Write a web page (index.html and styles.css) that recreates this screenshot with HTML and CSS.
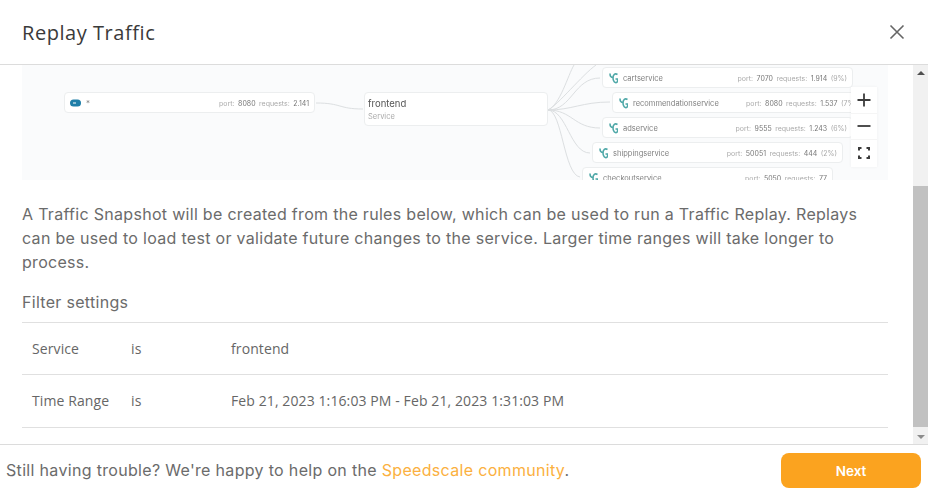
FILE: index.html
```html
<!DOCTYPE html>
<html>
  <head>
    <meta charset="utf-8">
    <title>Replay Traffic</title>
    <link rel="stylesheet" href="styles.css">
  </head>
  <body>
    <div class="modal">
      <header class="modal-head">
        <h1>Replay Traffic</h1>
        <svg class="close" width="16" height="16" viewBox="0 0 16 16"><path d="M1.500 1.500l13 13M14.500 1.500l-13 13"/></svg>
      </header>
      <div class="modal-mid">
        <div class="modal-body">
          <div class="map">
            <div class="map-inner">
              <svg class="edges" width="866" height="115" viewBox="0 0 866 115">
                <path d="M294 38C320 38 316 44 341 44"/>
                <path d="M526 45C550 45 552 13 578 13"/>
                <path d="M526 45C550 45 560 37 588 37"/>
                <path d="M526 45C550 45 552 63 578 63"/>
                <path d="M526 45C545 45 548 88 568 88"/>
                <path d="M526 45C540 45 542 110 558 112"/>
                <path d="M526 45C538 40 546 10 552 0"/>
                <path d="M526 45C536 40 560 10 574 0"/>
              </svg>
              <div class="node node-star">
                <svg class="pill" width="11" height="8" viewBox="0 0 11 8"><rect width="11" height="7" y="0.500" rx="3.500"/><path d="M3 4h3"/></svg>
                <span class="star">*</span>
                <span class="stats"><i>port:</i> 8080 <i>requests:</i> 2.141</span>
              </div>
              <div class="node node-front">
                <b>frontend</b>
                <small>Service</small>
              </div>
              <div class="node node-cart">
                <svg class="leaf" width="9" height="12" viewBox="0 0 9 12"><path d="M8.500 2.500C6 1 4 2.500 4 6s2 5 3.500 4.500S8.800 8.500 8.500 7H6.500M4 5.500C2 5.500 1 4 1 1.500"/></svg>
                <span class="name">cartservice</span>
                <span class="stats"><i>port:</i> 7070 <i>requests:</i> 1.914 <i>(9%)</i></span>
              </div>
              <div class="node node-rec">
                <svg class="leaf" width="9" height="12" viewBox="0 0 9 12"><path d="M8.500 2.500C6 1 4 2.500 4 6s2 5 3.500 4.500S8.800 8.500 8.500 7H6.500M4 5.500C2 5.500 1 4 1 1.500"/></svg>
                <span class="name">recommendationservice</span>
                <span class="stats"><i>port:</i> 8080 <i>requests:</i> 1.537 <i>(7%)</i></span>
              </div>
              <div class="node node-ad">
                <svg class="leaf" width="9" height="12" viewBox="0 0 9 12"><path d="M8.500 2.500C6 1 4 2.500 4 6s2 5 3.500 4.500S8.800 8.500 8.500 7H6.500M4 5.500C2 5.500 1 4 1 1.500"/></svg>
                <span class="name">adservice</span>
                <span class="stats"><i>port:</i> 9555 <i>requests:</i> 1.243 <i>(6%)</i></span>
              </div>
              <div class="node node-ship">
                <svg class="leaf" width="9" height="12" viewBox="0 0 9 12"><path d="M8.500 2.500C6 1 4 2.500 4 6s2 5 3.500 4.500S8.800 8.500 8.500 7H6.500M4 5.500C2 5.500 1 4 1 1.500"/></svg>
                <span class="name">shippingservice</span>
                <span class="stats"><i>port:</i> 50051 <i>requests:</i> 444 <i>(2%)</i></span>
              </div>
              <div class="node node-check">
                <svg class="leaf" width="9" height="12" viewBox="0 0 9 12"><path d="M8.500 2.500C6 1 4 2.500 4 6s2 5 3.500 4.500S8.800 8.500 8.500 7H6.500M4 5.500C2 5.500 1 4 1 1.500"/></svg>
                <span class="name">checkoutservice</span>
                <span class="stats"><i>port:</i> 5050 <i>requests:</i> 77</span>
              </div>
            </div>
            <div class="zoom-box">
              <div class="zoom-btn"><svg width="14" height="14" viewBox="0 0 14 14"><path d="M7 .500v13M.500 7h13"/></svg></div>
              <div class="zoom-btn"><svg width="14" height="14" viewBox="0 0 14 14"><path d="M.500 7h13"/></svg></div>
              <div class="zoom-btn"><svg width="14" height="14" viewBox="0 0 14 14"><path class="corners" d="M2 4.500V2h2.500M9.500 2H12v2.500M12 9.500V12H9.500M4.500 12H2V9.500"/></svg></div>
            </div>
          </div>
          <p class="intro">A Traffic Snapshot will be created from the rules below, which can be used to run a Traffic Replay. Replays can be used to load test or validate future changes to the service. Larger time ranges will take longer to process.</p>
          <h2>Filter settings</h2>
          <div class="rules">
            <div class="rule"><span>Service</span><span>is</span><span>frontend</span></div>
            <div class="rule"><span>Time Range</span><span>is</span><span>Feb 21, 2023 1:16:03 PM - Feb 21, 2023 1:31:03 PM</span></div>
          </div>
        </div>
        <div class="scrollbar">
          <div class="arrow up"></div>
          <div class="track"><div class="thumb"></div></div>
          <div class="arrow down"></div>
        </div>
      </div>
      <footer class="modal-foot">
        <p>Still having trouble? We're happy to help on the <a href="#">Speedscale community</a>.</p>
        <button class="next">Next</button>
      </footer>
    </div>
  </body>
</html>
```

FILE: styles.css
```css
html, body {
  margin: 0;
  height: 100%;
  background: #fff;
}
.modal {
  width: 928px;
  height: 491px;
  display: flex;
  flex-direction: column;
  overflow: hidden;
  font-family: "Open Sans", sans-serif;
  color: #5c5c5c;
}
.modal-head {
  height: 64px;
  flex: none;
  display: flex;
  align-items: center;
  justify-content: space-between;
  padding: 0 23px 0 22px;
  border-bottom: 1px solid #dcdcdc;
}
.modal-head h1 {
  margin: 0;
  font-size: 20px;
  font-weight: 400;
  color: #3a3a3a;
  letter-spacing: 0.55px;
}
.close path {
  fill: none;
  stroke: #666;
  stroke-width: 1.6;
}
.modal-mid {
  flex: 1;
  min-height: 0;
  display: flex;
}
.modal-body {
  flex: 1;
  padding: 0 25px 0 22px;
  overflow: hidden;
}
.map {
  height: 115px;
  position: relative;
  overflow: hidden;
  background: #fafbfc;
  filter: blur(0.6px);
}
.map-inner {
  position: absolute;
  inset: 0;
}
.edges {
  position: absolute;
  left: 0;
  top: 0;
}
.edges path {
  fill: none;
  stroke: #dcdfe1;
  stroke-width: 1;
}
.node {
  position: absolute;
  box-sizing: border-box;
  height: 21px;
  width: 251px;
  background: #fff;
  border: 1px solid #eceeef;
  border-radius: 4px;
  display: flex;
  align-items: center;
  padding: 1px 5px 0;
  font-family: Inter, sans-serif;
  font-size: 8px;
  color: #777;
  white-space: nowrap;
}
.node-star { left: 42px; top: 27px; }
.node-front {
  left: 342px;
  top: 27px;
  width: 184px;
  height: 34px;
  padding: 0 3px;
  flex-direction: column;
  align-items: flex-start;
  justify-content: center;
  gap: 3px;
}
.node-front b {
  font-weight: 400;
  font-size: 9.500px;
  color: #555;
  line-height: 11px;
}
.node-front small {
  font-size: 7.500px;
  color: #aaa;
  line-height: 9px;
}
.node-cart { left: 580px; top: 2px; }
.node-rec { left: 590px; top: 27px; }
.node-ad { left: 580px; top: 52px; }
.node-ship { left: 570px; top: 77px; }
.node-check { left: 560px; top: 102px; }
.pill rect { fill: #1f7ea8; }
.pill path {
  stroke: #fff;
  stroke-width: 1;
}
.star {
  margin-left: 5px;
  color: #888;
}
.leaf {
  flex: none;
  margin: 0 5px 0 1px;
}
.leaf path {
  fill: none;
  stroke: #4fa8a8;
  stroke-width: 1.6;
}
.name {
  font-size: 7.500px;
  color: #808080;
}
.stats {
  margin-left: auto;
  font-size: 7px;
  color: #777;
  word-spacing: 1.500px;
}
.stats i {
  font-style: normal;
  color: #aaa;
}
.zoom-box {
  position: absolute;
  left: 829px;
  top: 22px;
  width: 26px;
  background: #fff;
  box-shadow: 0 0 3px rgba(0, 0, 0, 0.05);
}
.zoom-btn {
  height: 26.500px;
  display: flex;
  align-items: center;
  justify-content: center;
  border-bottom: 1px solid #f5f5f5;
  box-sizing: border-box;
}
.zoom-btn:last-child { border-bottom: 0; }
.zoom-btn path {
  fill: none;
  stroke: #3c3c3c;
  stroke-width: 1.800;
}
.zoom-btn .corners { stroke-width: 2; }
.intro {
  margin: 22px 0 0;
  font-family: Inter, sans-serif;
  font-size: 16px;
  line-height: 24px;
  letter-spacing: 0.3px;
  color: #6b6b6b;
}
h2 {
  margin: 16px 0 0;
  font-family: Inter, sans-serif;
  font-size: 16px;
  line-height: 24px;
  font-weight: 400;
  letter-spacing: 0.3px;
  color: #6b6b6b;
}
.rules {
  margin-top: 8px;
  border-top: 1px solid #e0e0e0;
}
.rule {
  display: grid;
  grid-template-columns: 99px 100px 1fr;
  align-items: center;
  height: 51.300px;
  padding-left: 10px;
  border-bottom: 1px solid #e0e0e0;
  font-size: 14px;
  letter-spacing: 0.1px;
  color: #666;
}
.scrollbar {
  width: 15px;
  flex: none;
  display: flex;
  flex-direction: column;
  background: #f1f1f1;
}
.arrow {
  height: 15px;
  flex: none;
  display: flex;
  align-items: center;
  justify-content: center;
}
.arrow::before {
  content: "";
  border-left: 4px solid transparent;
  border-right: 4px solid transparent;
}
.arrow.up::before { border-bottom: 4px solid #505050; }
.arrow.down::before { border-top: 4px solid #8c8c8c; }
.track {
  flex: 1;
  display: flex;
  flex-direction: column;
  justify-content: flex-end;
}
.thumb {
  height: 241px;
  margin-bottom: 2px;
  background: #c1c1c1;
}
.modal-foot {
  height: 47px;
  flex: none;
  box-sizing: border-box;
  display: flex;
  align-items: center;
  justify-content: space-between;
  padding: 5px 7px 0 6px;
  border-top: 1px solid #dcdcdc;
}
.modal-foot p {
  margin: 0 0 2px;
  font-family: Inter, sans-serif;
  font-size: 16px;
  letter-spacing: 0.32px;
  color: #6b6b6b;
}
.modal-foot a {
  color: #fbb040;
  text-decoration: none;
}
.next {
  width: 140px;
  height: 35px;
  border: 0;
  border-radius: 8px;
  background: #fba31f;
  color: #fff;
  font-family: Inter, sans-serif;
  font-size: 13.500px;
  font-weight: 600;
}
```
